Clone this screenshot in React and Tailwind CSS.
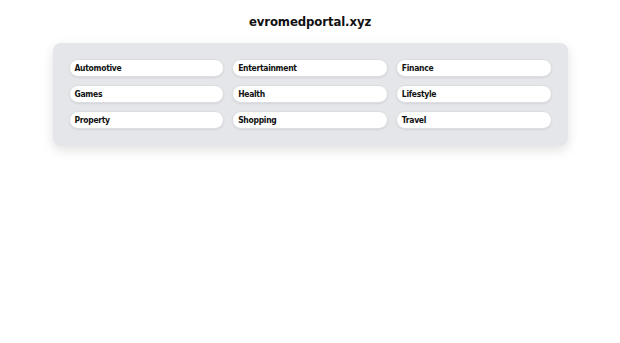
const categories = [
  "Automotive",
  "Entertainment",
  "Finance",
  "Games",
  "Health",
  "Lifestyle",
  "Property",
  "Shopping",
  "Travel",
];

export default function App() {
  return (
    <main
      className="min-h-screen bg-white"
      style={{ fontFamily: '"DejaVu Sans Condensed", "DejaVu Sans", sans-serif' }}
    >
      <h1 className="pt-[12px] text-center text-[13px] font-bold leading-[20px] tracking-[-0.1px] text-[#111]">
        evromedportal.xyz
      </h1>

      <section className="mx-auto mt-[11px] w-[515px] rounded-[8px] bg-[#e5e6e9] px-[16px] pt-[16px] pb-[17px] shadow-[0_4px_12px_rgba(0,0,0,0.12)]">
        <div className="grid grid-cols-3 gap-[8px]">
          {categories.map((name) => (
            <a
              key={name}
              href="#"
              className="flex h-[18px] items-center rounded-full border border-[#dcdde0] bg-white px-[5px] text-[8.5px] font-bold tracking-[-0.3px] text-[#111] shadow-[0_1px_2px_rgba(0,0,0,0.08)]"
            >
              {name}
            </a>
          ))}
        </div>
      </section>
    </main>
  );
}
